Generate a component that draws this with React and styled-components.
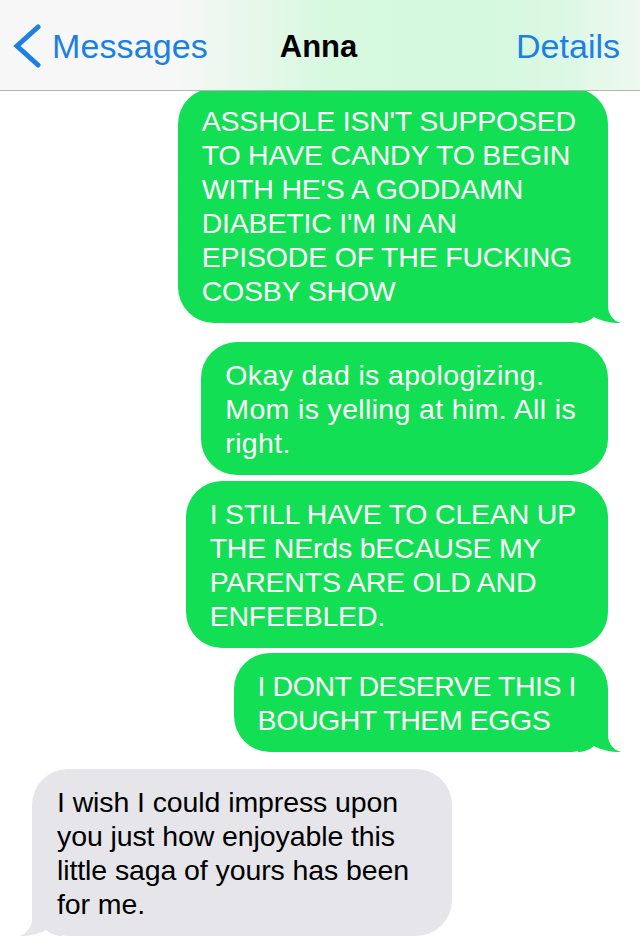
import React from "react"
import styled, { createGlobalStyle } from "styled-components"

const GREEN = "#13df54"
const GRAY = "#e5e5ea"
const BLUE = "#1c7fe4"

const GlobalStyle = createGlobalStyle`
  html, body {
    margin: 0;
    padding: 0;
    background: #ffffff;
  }
  body {
    font-family: "Liberation Sans", Arial, sans-serif;
    -webkit-font-smoothing: antialiased;
  }
`

const messages = [
  {
    id: 1,
    fromMe: true,
    tail: true,
    gap: 0,
    tracking: -0.2,
    lines: [
      "ASSHOLE ISN'T SUPPOSED",
      "TO HAVE CANDY TO BEGIN",
      "WITH HE'S A GODDAMN",
      "DIABETIC I'M IN AN",
      "EPISODE OF THE FUCKING",
      "COSBY SHOW",
    ],
  },
  {
    id: 2,
    fromMe: true,
    tail: false,
    gap: 19,
    tracking: 0.35,
    lines: ["Okay dad is apologizing.", "Mom is yelling at him. All is", "right."],
  },
  {
    id: 3,
    fromMe: true,
    tail: false,
    gap: 6,
    tracking: -0.2,
    lines: [
      "I STILL HAVE TO CLEAN UP",
      "THE NErds bECAUSE MY",
      "PARENTS ARE OLD AND",
      "ENFEEBLED.",
    ],
  },
  {
    id: 4,
    fromMe: true,
    tail: true,
    gap: 5,
    tracking: -0.45,
    lines: ["I DONT DESERVE THIS I", "BOUGHT THEM EGGS"],
  },
  {
    id: 5,
    fromMe: false,
    tail: true,
    gap: 17,
    tracking: -0.1,
    lines: [
      "I wish I could impress upon",
      "you just how enjoyable this",
      "little saga of yours has been",
      "for me.",
    ],
  },
]

const Tail = ({ fromMe }) => (
  <StyledTail $fromMe={fromMe} viewBox="0 0 44 40" width="44" height="40">
    <path
      d="M0 0 H30 V23 C30 31 35 38 43 40 C36 40.5 24 38.5 16 34 C12 37.5 6 40 0 40 Z"
      fill={fromMe ? GREEN : GRAY}
    />
  </StyledTail>
)

const App = () => (
  <Page>
    <GlobalStyle />
    <NavBar>
      <BackButton>
        <svg width="28" height="44" viewBox="0 0 28 44">
          <polyline
            points="25,3 4,22 25,41"
            fill="none"
            stroke={BLUE}
            strokeWidth="5"
            strokeLinecap="round"
            strokeLinejoin="miter"
          />
        </svg>
        <span>Messages</span>
      </BackButton>
      <Title>Anna</Title>
      <NavLink>Details</NavLink>
    </NavBar>

    <Thread>
      {messages.map(m => (
        <Bubble key={m.id} $fromMe={m.fromMe} $gap={m.gap} $tracking={m.tracking}>
          {m.lines.map((line, i) => (
            <Line key={i}>{line}</Line>
          ))}
          {m.tail && <Tail fromMe={m.fromMe} />}
        </Bubble>
      ))}
    </Thread>
  </Page>
)

const Page = styled.div`
  position: relative;
  width: 640px;
  height: 939px;
  overflow: hidden;
  background: #ffffff;
`

const NavBar = styled.header`
  position: absolute;
  top: 0;
  left: 0;
  right: 0;
  z-index: 10;
  height: 91px;
  box-sizing: border-box;
  display: grid;
  grid-template-columns: 1fr auto 1fr;
  align-items: center;
  padding: 3px 20px 0 13px;
  border-bottom: 1px solid #b4b4b4;
  background: linear-gradient(
    90deg,
    #f7f7f7 0%,
    #f6f7f6 28%,
    #e6f8ea 40%,
    #d6f9e0 52%,
    #d4f9de 75%,
    #dcf8e4 88%,
    #eef8f0 100%
  );
`

const BackButton = styled.div`
  justify-self: start;
  display: flex;
  align-items: center;
  gap: 11px;
  color: ${BLUE};
  font-size: 34px;
  letter-spacing: 0.1px;

  svg {
    display: block;
    margin-top: -1px;
  }
`

const Title = styled.div`
  justify-self: center;
  margin-left: 4px;
  font-size: 31px;
  font-weight: 700;
  color: #000000;
`

const NavLink = styled.div`
  justify-self: end;
  font-size: 34px;
  color: ${BLUE};
`

const Thread = styled.main`
  display: flex;
  flex-direction: column;
  padding-top: 88px;
`

const Bubble = styled.div`
  position: relative;
  align-self: ${props => (props.$fromMe ? "flex-end" : "flex-start")};
  margin: ${props => props.$gap}px ${props => (props.$fromMe ? "32px" : "0")} 0
    ${props => (props.$fromMe ? "0" : "32px")};
  padding: ${props => (props.$fromMe ? "16px 32px 15px 24px" : "16px 43px 15px 25px")};
  border-radius: 36px;
  background: ${props => (props.$fromMe ? GREEN : GRAY)};
  color: ${props => (props.$fromMe ? "#ffffff" : "#000000")};
  font-size: 28.5px;
  line-height: 34px;
  letter-spacing: ${props => props.$tracking}px;
`

const Line = styled.div`
  position: relative;
  z-index: 1;
  white-space: nowrap;
`

const StyledTail = styled.svg`
  position: absolute;
  bottom: 0;
  ${props => (props.$fromMe ? "right: -14px;" : "left: -14px; transform: scaleX(-1);")}
  display: block;
`

export default App
